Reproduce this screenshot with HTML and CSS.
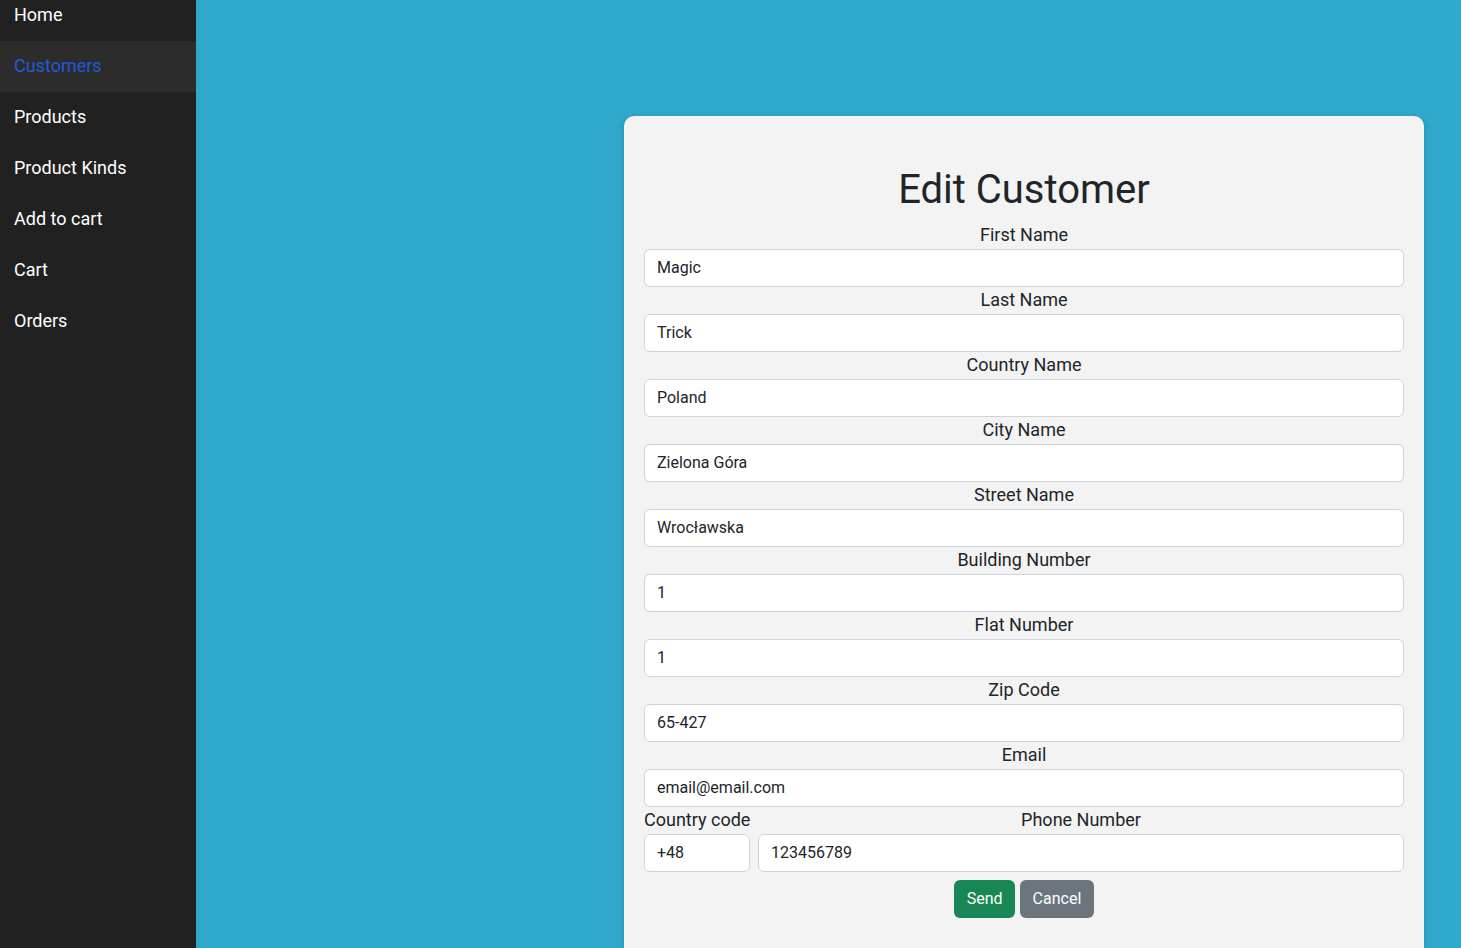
FILE: index.html
```html
<!DOCTYPE html>
<html>
<head>
<meta charset="utf-8">
<link rel="stylesheet" href="styles.css">
</head>
<body>
<div class="layout">
  <nav class="sidebar">
    <a class="nav-item">Home</a>
    <a class="nav-item active">Customers</a>
    <a class="nav-item">Products</a>
    <a class="nav-item">Product Kinds</a>
    <a class="nav-item">Add to cart</a>
    <a class="nav-item">Cart</a>
    <a class="nav-item">Orders</a>
  </nav>
  <main class="main">
    <div class="card">
      <h1 class="title">Edit Customer</h1>
      <div class="group"><label>First Name</label><input class="field" value="Magic"></div>
      <div class="group"><label>Last Name</label><input class="field" value="Trick"></div>
      <div class="group"><label>Country Name</label><input class="field" value="Poland"></div>
      <div class="group"><label>City Name</label><input class="field" value="Zielona Góra"></div>
      <div class="group"><label>Street Name</label><input class="field" value="Wrocławska"></div>
      <div class="group"><label>Building Number</label><input class="field" value="1"></div>
      <div class="group"><label>Flat Number</label><input class="field" value="1"></div>
      <div class="group"><label>Zip Code</label><input class="field" value="65-427"></div>
      <div class="group"><label>Email</label><input class="field" value="email@email.com"></div>
      <div class="phone-row">
        <div class="group code"><label class="left">Country code</label><input class="field" value="+48"></div>
        <div class="group number"><label>Phone Number</label><input class="field" value="123456789"></div>
      </div>
      <div class="actions">
        <button class="btn btn-send">Send</button>
        <button class="btn btn-cancel">Cancel</button>
      </div>
    </div>
  </main>
</div>
</body>
</html>
```

FILE: styles.css
```css
* { box-sizing: border-box; }
html, body { margin: 0; height: 100%; overflow: hidden; }
body {
  font-family: Roboto, "Liberation Sans", sans-serif;
  background: #2fa8cb;
  color: #212529;
}
.layout { display: flex; height: 948px; }
.sidebar {
  width: 196px;
  flex: 0 0 196px;
  background: #212121;
  display: flex;
  flex-direction: column;
  margin-top: -10px;
}
.nav-item {
  display: block;
  height: 51px;
  line-height: 49px;
  padding: 0 0 2px 14px;
  color: #ffffff;
  font-size: 18px;
  text-decoration: none;
}
.nav-item.active { background: #2c2c2c; color: #1f5bd6; }
.main { flex: 1; display: flex; justify-content: flex-end; padding-right: 37px; }
.card {
  width: 800px;
  margin-top: 116px;
  background: #f3f3f3;
  border-radius: 10px;
  padding: 50px 20px 40px;
  box-shadow: 0 2px 6px rgba(0,0,0,0.15);
  align-self: flex-start;
}
.title {
  margin: 0 0 8px;
  text-align: center;
  font-weight: 400;
  font-size: 40px;
  line-height: 48px;
}
.group { display: flex; flex-direction: column; }
.group label {
  text-align: center;
  font-size: 18px;
  line-height: 25px;
  padding-bottom: 2px;
}
.group label.left { text-align: left; }
.field {
  height: 38px;
  width: 100%;
  border: 1px solid #ced4da;
  border-radius: 6px;
  background: #fff;
  padding: 4px 12px 6px;
  font-family: inherit;
  font-size: 16px;
  line-height: 26px;
  color: #212529;
  outline: none;
}
.phone-row { display: flex; gap: 8px; }
.code { width: 106px; flex: 0 0 106px; }
.code label { white-space: nowrap; }
.number { flex: 1; }
.actions { display: flex; justify-content: center; gap: 5px; margin-top: 8px; }
.btn {
  height: 38px;
  border: none;
  border-radius: 6px;
  padding: 0 12.5px 2px;
  font-family: inherit;
  font-size: 16px;
  color: #fff;
}
.btn-send { background: #198754; }
.btn-cancel { background: #6c757d; }
```
